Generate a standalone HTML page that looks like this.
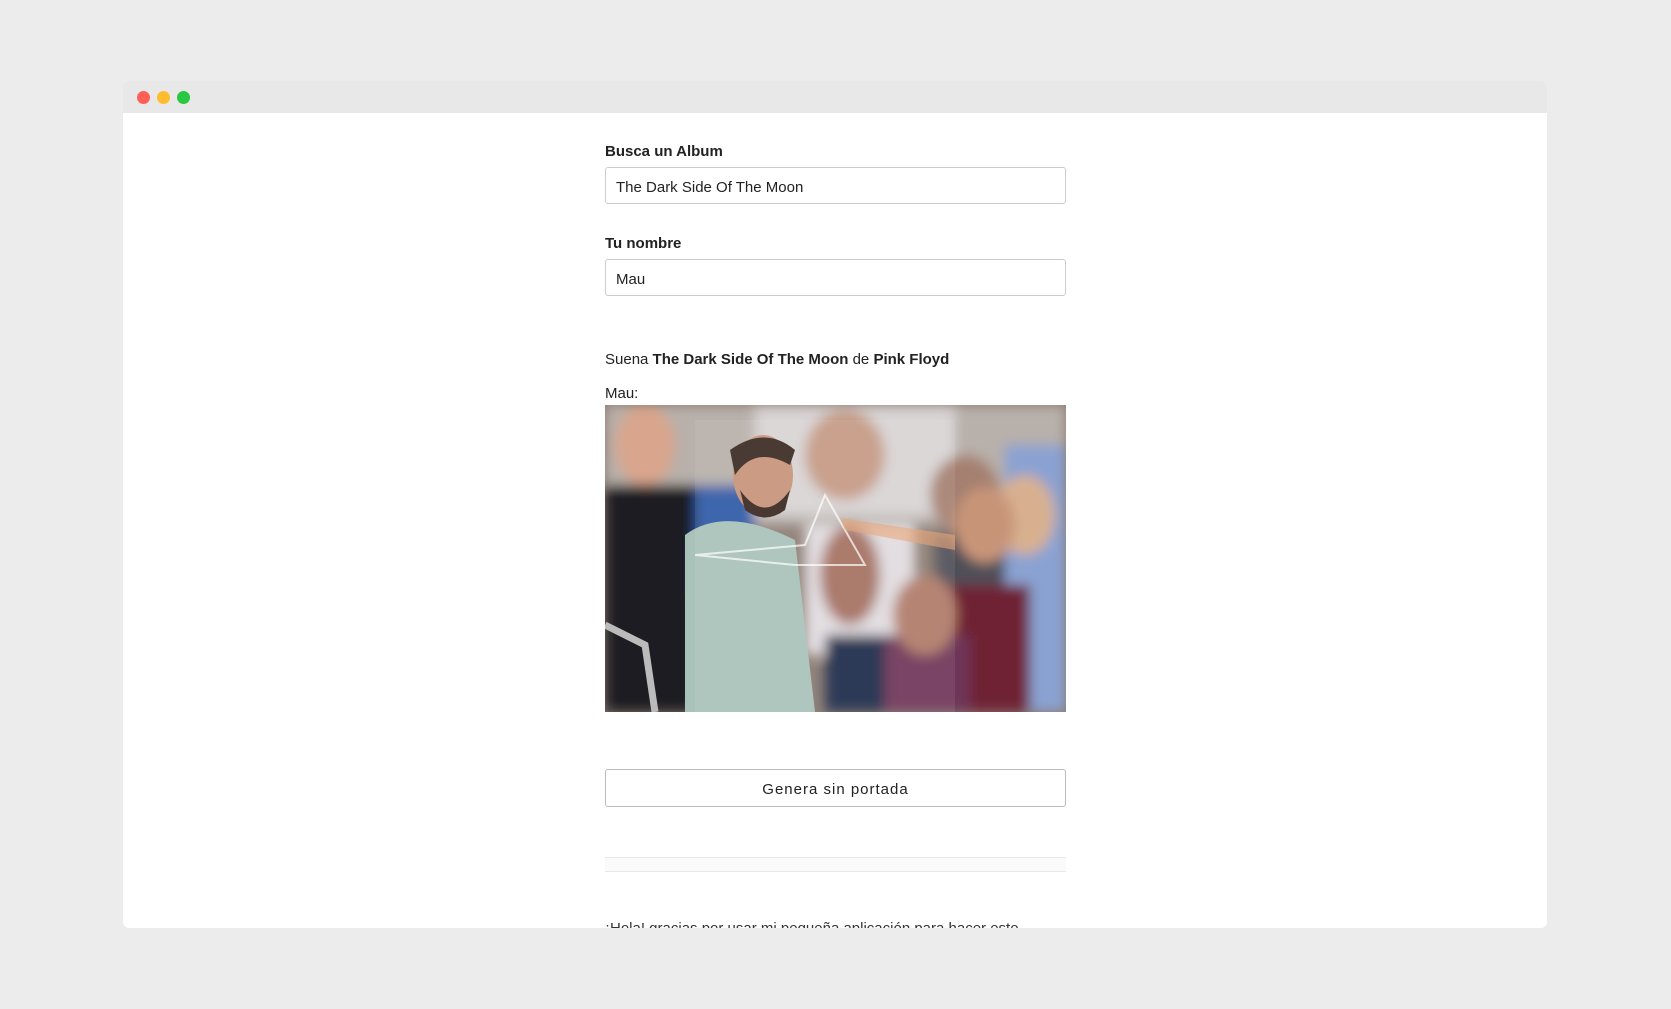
<!DOCTYPE html>
<html><head><meta charset="utf-8"><style>
*{margin:0;padding:0;box-sizing:border-box}
body{width:1671px;height:1009px;background:#ececec;font-family:"Liberation Sans",sans-serif;position:relative;overflow:hidden}
.win{position:absolute;left:123px;top:81px;width:1424px;height:847px;background:#fff;border-radius:6px;overflow:hidden}
.bar{height:32px;background:#e8e8e8;position:relative}
.dot{position:absolute;top:10px;width:13px;height:13px;border-radius:50%}
.a{position:absolute;left:605px;color:#222}
.lbl{font-weight:bold;font-size:15px;color:#222}
.inp{position:absolute;left:605px;width:461px;height:37px;border:1px solid #ccc;border-radius:3px;font-size:15px;padding:11px 10px 9px;color:#222}
</style></head><body>
<div class="win"><div class="bar">
<div class="dot" style="left:14px;background:#fe5f57"></div>
<div class="dot" style="left:34px;background:#febc2e"></div>
<div class="dot" style="left:54px;background:#28c840"></div></div></div>
<div class="a lbl" style="top:143px">Busca un Album</div>
<div class="inp" style="top:167px">The Dark Side Of The Moon</div>
<div class="a lbl" style="top:235px">Tu nombre</div>
<div class="inp" style="top:259px">Mau</div>
<div class="a" style="top:351px;font-size:15px">Suena <b>The Dark Side Of The Moon</b> de <b>Pink Floyd</b></div>
<div class="a" style="top:385px;font-size:15px">Mau:</div>
<svg class="a" style="top:405px" width="461" height="307" viewBox="0 0 461 307">
<defs><filter id="b"><feGaussianBlur stdDeviation="6"/></filter></defs>
<rect width="461" height="307" fill="#8a7a70"/>
<g filter="url(#b)">
<rect x="0" y="0" width="461" height="120" fill="#b8b0aa"/>
<rect x="150" y="0" width="200" height="110" fill="#d8d4d4"/>
<ellipse cx="40" cy="40" rx="30" ry="40" fill="#d9a58c"/>
<rect x="0" y="80" width="90" height="227" fill="#1e1e22"/>
<rect x="90" y="80" width="60" height="110" fill="#2f5aa6"/>
<ellipse cx="240" cy="50" rx="40" ry="45" fill="#c59a84"/>
<rect x="200" y="120" width="110" height="130" fill="#e1dce0"/>
<ellipse cx="360" cy="90" rx="35" ry="40" fill="#a58070"/>
<rect x="330" y="130" width="70" height="100" fill="#505058"/>
<rect x="400" y="40" width="61" height="267" fill="#8aa2d2"/>
<ellipse cx="420" cy="110" rx="30" ry="40" fill="#d8b090"/>
<rect x="345" y="180" width="80" height="127" fill="#6f2436"/>
<ellipse cx="380" cy="120" rx="30" ry="38" fill="#c89478"/>
<rect x="275" y="230" width="90" height="77" fill="#6e3458"/>
<ellipse cx="320" cy="210" rx="32" ry="40" fill="#b07a68"/>
<rect x="220" y="230" width="60" height="77" fill="#1e2a4a"/>
<ellipse cx="245" cy="170" rx="30" ry="50" fill="#a47060"/>
</g>
<path d="M80 130 Q120 100 190 135 L210 307 L80 307Z" fill="#a9c2ba"/>
<ellipse cx="158" cy="70" rx="30" ry="40" fill="#c8937a"/>
<path d="M125 45 Q160 20 190 45 L185 60 Q150 40 130 70Z" fill="#3a2a22"/>
<path d="M135 85 Q160 120 185 85 L180 105 Q160 120 140 105Z" fill="#3a2820"/>
<path d="M0 220 L40 240 L50 307" stroke="#bbb" stroke-width="7" fill="none"/>
<path d="M90 150 L200 140 L220 90 L260 160 L190 160Z" stroke="#fff" stroke-opacity=".7" fill="none" stroke-width="2"/>
<path d="M235 113 L350 130 L350 145 L240 125Z" fill="#e8a070" opacity=".6"/>
<rect x="90" y="15" width="260" height="292" fill="#fff" opacity=".08"/>
</svg>
<div class="inp" style="top:769px;height:38px;text-align:center;font-size:15px;letter-spacing:1px;border-color:#bbb">Genera sin portada</div>
<div style="position:absolute;left:605px;top:857px;width:461px;height:15px;background:#fafafa;border-top:1px solid #e8e8e8;border-bottom:1px solid #e8e8e8"></div>
<div class="a" style="top:920px;font-size:15px;color:#333;height:8px;overflow:hidden;line-height:18px"><span style="position:relative;top:0">¡Hola! gracias por usar mi pequeña aplicación para hacer esto</span></div>
</body></html>
